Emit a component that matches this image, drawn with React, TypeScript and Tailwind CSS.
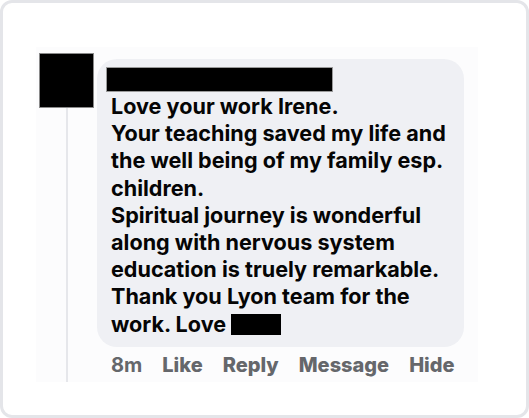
export default function App() {
  const font = { fontFamily: "Inter, 'Noto Sans', sans-serif" };
  const lines = [
    "Love your work Irene.",
    "Your teaching saved my life and",
    "the well being of my family esp.",
    "children.",
    "Spiritual journey is wonderful",
    "along with nervous system",
    "education is truely remarkable.",
    "Thank you Lyon team for the",
  ];
  return (
    <div className="w-[529px] h-[418px] bg-white">
      <div className="w-full h-full border-[3px] border-[#e4e5e9] rounded-[12px] bg-white pl-[33px] pt-[44px]">
        <div className="w-[442px] h-[335px] bg-[#fcfcfd] flex" style={font}>
          <div className="w-[58px] pl-[3px] pt-[6px] flex flex-col items-center shrink-0">
            <div className="w-[55px] h-[55px] bg-black border border-[#8a8a8a]" />
            <div className="w-[2px] flex-1 bg-[#e6e7eb]" />
          </div>
          <div className="ml-[3px] pt-[12px] flex flex-col">
            <div className="w-[367px] rounded-[20px] bg-[#eff0f4] pt-[8px] pb-[9px]">
              <div className="ml-[9px] w-[227px] h-[25px] bg-black border border-[#9a9a9a]" />
              <div className="pl-[14px] mt-[1px] text-[21.6px] leading-[27.2px] font-bold text-[#050505] whitespace-nowrap">
                {lines.map((l) => (
                  <div key={l}>{l}</div>
                ))}
                <div>
                  work. Love{" "}
                  <span className="inline-block w-[50px] h-[21px] bg-black align-[-3px]" />
                </div>
              </div>
            </div>
            <div className="flex items-center pl-[14px] pt-[3px] text-[20px] text-[#65676b] gap-[20px]">
              <span className="font-bold">8m</span>
              <span className="font-extrabold">Like</span>
              <span className="font-extrabold">Reply</span>
              <span className="font-extrabold">Message</span>
              <span className="font-extrabold">Hide</span>
            </div>
          </div>
        </div>
      </div>
    </div>
  );
}
